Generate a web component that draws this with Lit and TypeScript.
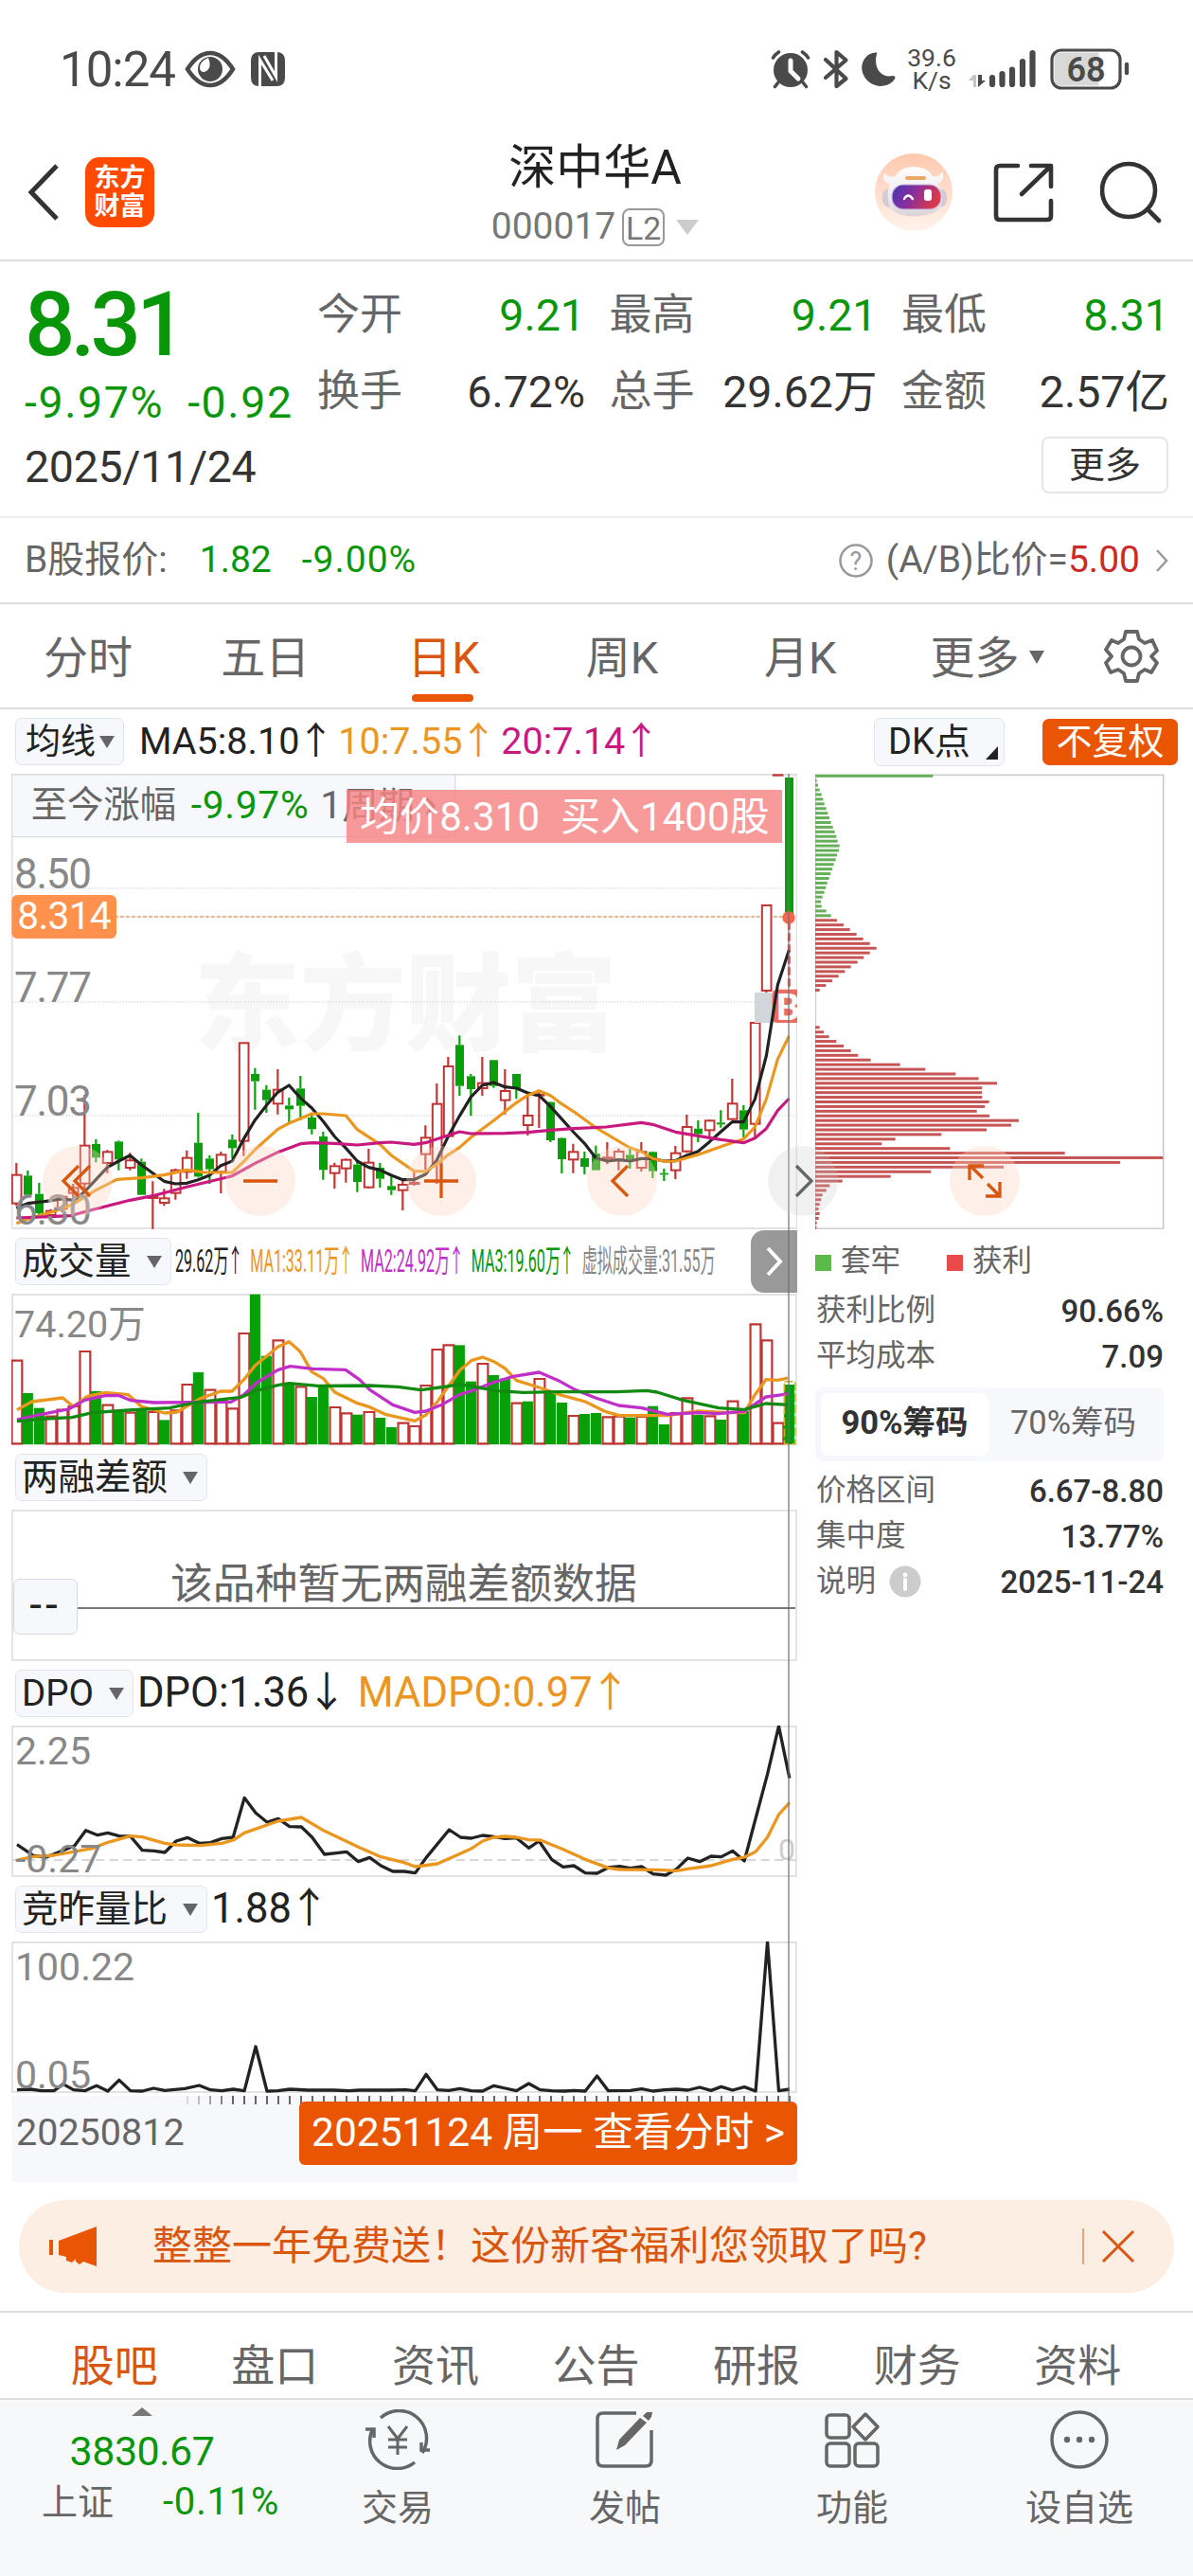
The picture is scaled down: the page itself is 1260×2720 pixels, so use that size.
import { html, svg, css, LitElement } from 'lit';
import { customElement, property } from 'lit/decorators.js';
import { classMap } from 'lit/directives/class-map.js';

type Candle = [dir: 'u' | 'd', high: number, top: number, bottom: number, low: number];

// Vertical positions in thirds of a pixel, one entry per trading day
const CANDLES: Candle[] = [
    ['u', 1254, 1291, 1383, 1390], ['d', 1278, 1294, 1355, 1362], ['d', 1317, 1352, 1413, 1420],
    ['u', 1400, 1405, 1420, 1424], ['u', 1355, 1360, 1400, 1410], ['u', 1320, 1332, 1350, 1365],
    ['u', 1038, 1198, 1320, 1350], ['d', 1179, 1194, 1237, 1252], ['u', 1213, 1218, 1255, 1286],
    ['d', 1183, 1186, 1243, 1277], ['u', 1222, 1245, 1270, 1277], ['d', 1240, 1250, 1355, 1355],
    ['u', 1312, 1360, 1366, 1463], ['u', 1336, 1365, 1381, 1390], ['u', 1272, 1276, 1350, 1370],
    ['u', 1214, 1237, 1283, 1304], ['d', 1095, 1190, 1297, 1300], ['d', 1230, 1240, 1274, 1320],
    ['u', 1218, 1227, 1283, 1350], ['d', 1164, 1180, 1207, 1240], ['u', 873, 873, 1185, 1232],
    ['d', 953, 972, 995, 1085], ['d', 1007, 1022, 1055, 1095], ['u', 957, 1021, 1067, 1100],
    ['d', 1047, 1072, 1084, 1127], ['d', 978, 1018, 1073, 1118], ['d', 1100, 1110, 1147, 1163],
    ['d', 1155, 1170, 1276, 1307], ['u', 1253, 1263, 1287, 1335], ['u', 1240, 1243, 1272, 1316],
    ['d', 1250, 1259, 1314, 1346], ['u', 1209, 1252, 1332, 1335], ['d', 1254, 1269, 1304, 1332],
    ['d', 1297, 1327, 1340, 1355], ['u', 1305, 1322, 1341, 1404], ['u', 1277, 1316, 1321, 1326],
    ['u', 1135, 1173, 1227, 1275], ['u', 1002, 1066, 1255, 1320], ['u', 918, 947, 1170, 1170],
    ['d', 850, 880, 1010, 1041], ['d', 972, 979, 1020, 1105], ['u', 918, 1000, 1018, 1041],
    ['d', 928, 928, 1010, 1016], ['u', 957, 1025, 1056, 1100], ['d', 972, 972, 1017, 1051],
    ['u', 1030, 1103, 1135, 1167], ['u', 1030, 1037, 1041, 1143], ['d', 1060, 1061, 1182, 1188],
    ['d', 1174, 1175, 1242, 1287], ['u', 1193, 1218, 1244, 1286], ['d', 1218, 1239, 1266, 1290],
    ['d', 1199, 1225, 1277, 1277], ['u', 1188, 1236, 1240, 1258], ['u', 1208, 1217, 1245, 1277],
    ['d', 1209, 1228, 1244, 1272], ['u', 1188, 1218, 1270, 1281], ['d', 1217, 1219, 1280, 1302],
    ['d', 1272, 1286, 1291, 1311], ['u', 1200, 1222, 1278, 1305], ['u', 1101, 1139, 1218, 1222],
    ['d', 1119, 1145, 1162, 1188], ['u', 1117, 1119, 1151, 1178], ['d', 1087, 1126, 1132, 1142],
    ['u', 987, 1065, 1116, 1118], ['d', 1071, 1087, 1148, 1180], ['u', 809, 809, 1131, 1178],
    ['u', 435, 437, 709, 716], ['u', 24, 24, 27, 27], ['d', 33, 33, 465, 465],
];

const MA5 = '52,1397 88,1382 140,1376 196,1368 236,1372 268,1345 340,1268 376,1248 412,1230 448,1260 484,1286 520,1312 556,1320 592,1318 628,1307 664,1293 700,1262 736,1248 772,1178 808,1118 844,1072 880,1030 916,1008 952,1048 988,1080 1024,1122 1060,1170 1096,1207 1132,1248 1168,1268 1204,1276 1240,1293 1276,1307 1312,1307 1348,1290 1384,1245 1420,1170 1456,1105 1492,1045 1528,1008 1564,999 1600,1013 1636,1017 1672,1032 1708,1040 1744,1075 1780,1115 1816,1155 1852,1192 1888,1238 1924,1248 1960,1244 1996,1248 2032,1240 2068,1240 2104,1248 2140,1247 2176,1230 2212,1217 2248,1187 2284,1155 2320,1124 2356,1124 2392,1052 2428,915 2464,690 2500,580';
const MA10 = '52,1445 100,1427 170,1408 230,1385 300,1342 370,1306 450,1301 520,1292 592,1276 650,1284 736,1284 772,1250 808,1212 880,1147 916,1128 988,1098 1024,1098 1096,1104 1132,1148 1204,1195 1240,1230 1312,1280 1348,1281 1384,1258 1420,1228 1456,1205 1492,1173 1564,1120 1636,1063 1672,1040 1708,1025 1744,1040 1780,1067 1816,1090 1888,1142 1960,1185 1996,1206 2032,1218 2068,1240 2104,1249 2140,1248 2212,1228 2284,1202 2356,1178 2392,1140 2428,1052 2464,925 2500,852';
const MA20 = '52,1428 160,1424 222,1421 300,1400 412,1372 484,1358 592,1330 736,1295 808,1255 880,1220 952,1193 990,1190 1060,1192 1132,1197 1204,1190 1240,1188 1312,1195 1348,1190 1384,1178 1456,1155 1492,1161 1600,1160 1672,1157 1744,1150 1816,1145 1920,1140 2032,1126 2068,1132 2140,1156 2212,1168 2284,1180 2356,1190 2392,1175 2428,1145 2464,1088 2500,1050';

const VOLUME_TOPS = [
    440, 543, 590, 617, 596, 585, 411, 537, 581, 598, 605, 597, 603, 628, 598, 516, 477, 533, 568, 592,
    354, 230, 425, 376, 510, 523, 555, 518, 588, 607, 611, 603, 621, 651, 638, 648, 519, 405, 391, 391,
    506, 450, 486, 497, 575, 569, 498, 540, 573, 615, 609, 606, 619, 617, 620, 618, 584, 642, 606, 559,
    612, 616, 627, 569, 600, 325, 376, 638, 516,
];
const VOLUME_DOWN = new Set([
    1, 2, 7, 9, 11, 13, 16, 21, 22, 24, 26, 27, 30, 32, 33, 39, 40, 42, 43, 45, 47, 48, 50, 51, 54, 56, 57, 60, 62, 64, 68,
]);
const VOL_MA1 = '33,596 62,570 122,558 143,586 170,553 205,541 250,548 275,585 320,606 345,603 390,560 430,537 452,537 475,500 497,455 520,425 541,397 563,380 585,412 607,475 630,497 652,540 696,575 720,587 750,610 808,631 830,612 852,570 874,520 896,470 918,440 940,429 962,443 984,465 1006,503 1050,525 1095,550 1140,570 1180,602 1205,613 1250,614 1300,614 1360,600 1410,604 1450,605 1470,550 1492,500 1515,502 1535,495';
const VOL_MA2 = '33,627 80,610 133,594 165,565 205,551 230,550 255,566 300,573 450,571 475,548 500,510 541,470 565,458 610,466 673,469 700,500 720,532 765,580 808,604 830,600 860,580 895,548 920,535 960,510 1000,490 1050,477 1090,505 1120,532 1160,558 1205,582 1250,590 1300,610 1360,605 1400,608 1450,600 1492,555 1515,550 1536,545';
const VOL_MA3 = '33,632 90,624 140,620 180,605 250,597 330,590 380,573 420,565 470,556 500,535 541,518 563,512 620,520 720,519 775,523 820,533 870,522 895,515 930,525 970,536 1020,541 1080,539 1200,539 1260,535 1280,540 1330,565 1400,590 1450,595 1492,576 1536,580';

const DPO = '33,1103 65,1138 90,1143 145,1107 167,1058 190,1073 210,1066 232,1076 254,1077 277,1121 300,1123 321,1128 343,1092 365,1081 388,1099 410,1097 432,1084 454,1080 476,955 498,1003 520,1032 542,1021 564,1046 587,1047 608,1080 632,1134 655,1130 675,1126 698,1157 720,1144 742,1170 765,1188 787,1188 809,1193 830,1145 875,1056 897,1080 918,1083 940,1074 962,1078 984,1084 1006,1082 1030,1114 1050,1092 1075,1151 1097,1174 1118,1170 1140,1193 1163,1194 1185,1176 1207,1172 1228,1178 1250,1173 1272,1196 1297,1200 1318,1180 1340,1146 1363,1157 1385,1140 1405,1142 1427,1123 1450,1155 1472,1020 1495,880 1517,728 1538,893';
const MADPO = '33,1152 65,1141 105,1137 180,1115 210,1096 254,1076 277,1079 321,1099 343,1104 390,1106 432,1099 454,1089 476,1066 541,1029 587,1017 632,1060 700,1112 742,1142 787,1160 809,1173 852,1164 918,1116 940,1092 962,1080 984,1077 1006,1080 1030,1088 1053,1089 1097,1118 1140,1150 1185,1177 1207,1182 1280,1183 1318,1186 1340,1180 1385,1170 1427,1150 1450,1143 1472,1126 1495,1080 1517,1008 1538,970';
const AUCTION = '33,650 60,648 80,653 105,653 123,632 143,650 165,653 188,637 210,654 232,619 254,653 277,654 299,645 321,652 360,646 388,636 410,650 432,653 454,648 476,653 498,513 520,654 541,653 565,648 600,651 650,651 680,653 700,651 760,651 790,650 809,653 830,601 852,650 874,652 896,646 918,653 940,654 962,637 984,645 1006,653 1030,630 1052,650 1075,653 1100,654 1118,652 1140,654 1163,606 1185,653 1228,652 1250,647 1272,654 1295,650 1318,648 1340,651 1363,642 1385,652 1405,640 1427,651 1450,641 1472,654 1495,181 1517,653 1538,648';

// Chip distribution, top to bottom
const CHIPS = [
    437, 69, 73, 78, 84, 89, 93, 99, 104, 109, 114, 120, 126, 131, 135, 141, 139, 133, 129, 123, 118, 113, 108, 102, 98,
    93, 87, 82, 84, 99, 114, 133, 154, 174, 195, 216, 237, 258, 237, 218, 198, 177, 158, 138, 118, 98, 78,
    0, 0, 0, 0, 0, 0, 0, 78, 91, 108, 131, 154, 177, 200, 240, 333, 413, 509, 582, 640, 593, 592, 593, 615, 602, 576,
    616, 709, 685, 607, 464, 318, 275, 491, 855, 1166, 1030, 661, 431, 303, 150, 110, 99, 87, 83, 78, 75, 78, 75, 69, 68,
];
const LOSING_CHIPS = 31;

const QUOTES = [
    ['今开', '9.21', true], ['最高', '9.21', true], ['最低', '8.31', true],
    ['换手', '6.72%', false], ['总手', '29.62万', false], ['金额', '2.57亿', false],
] as const;

const text = css`
    :host {
        font-family: Roboto, "Noto Sans CJK SC", sans-serif;
        line-height: 1;
        white-space: nowrap;
    }

    svg {
        display: block;
        flex: none;
    }
`;

@customElement('indicator-pill')
export class IndicatorPill extends LitElement {
    static styles = [text, css`
        :host {
            box-sizing: border-box;
            flex: none;
            display: inline-flex;
            align-items: center;
            gap: var(--pill-gap, 16px);
            height: 50px;
            padding: 0 9px 0 var(--pill-start, 6px);
            border: 1.5px solid #dfe3ea;
            border-radius: 7px;
            background: #f7f8fb;
            color: #222;
            font-size: var(--pill-size, 38.5px);
        }

        i {
            border: 8px solid transparent;
            border-top: 13px solid #666;
            border-bottom: 0;
        }
    `];

    @property()
    label = '';

    render() {
        return html`<span>${this.label}</span><i></i>`;
    }
}

@customElement('candle-chart')
export class CandleChart extends LitElement {
    static styles = [text, css`
        :host {
            display: block;
        }

        .axis {
            font-size: 132px;
            fill: #888;
        }

        .line {
            fill: none;
            stroke-width: 9.5;
            stroke-linejoin: round;
        }

        .info {
            font-size: 115px;
            fill: #666;
        }

        .info_value {
            font-size: 122px;
            fill: #0a960a;
        }

        .mark {
            font-size: 336px;
            font-weight: 900;
            fill: #f7f7f7;
        }

        .banner {
            font-size: 126px;
            fill: #fff;
        }
    `];

    candle([dir, high, top, bottom, low]: Candle, i: number) {
        const x = 52 + i * 36;
        const color = dir === 'u' ? '#bf3434' : '#08a008';
        return svg`
            <path d="M${x} ${high}V${top}M${x} ${bottom}V${low}" stroke=${color} stroke-width="6.5" />
            ${dir === 'u'
                ? svg`<rect x=${x - 13.5} y=${top + 1} width="29" height=${Math.max(bottom - top - 2, 1)} fill="#fff" stroke=${color} stroke-width="6" />`
                : svg`<rect x=${x - 13} y=${top} width="27" height=${bottom - top} fill=${color} />`}
        `;
    }

    render() {
        return html`
            <svg width="830" height="481" viewBox="36 21 2490 1443">
                <text class="mark" x="615" y="872" textLength="1340">东方财富</text>
                <rect x="38" y="24" width="2487" height="1437" fill="none" stroke="#e2e2e2" stroke-width="6" />
                <path d="M38 384H2524M38 744H2524M38 1104H2524" stroke="#ddd" stroke-width="4" stroke-dasharray="4 5" />
                <rect x="38" y="24" width="1404" height="197" fill="#f7f8fb" stroke="#dcdde3" stroke-width="4" />
                <text class="info" x="98" y="159">至今涨幅</text>
                <text class="info info_value" x="605" y="161" textLength="372">-9.97%</text>
                <text class="info" x="1015" y="161"><tspan font-size="122">1</tspan>周期</text>
                <path d="M1352 98L1374 124L1352 150" fill="none" stroke="#666" stroke-width="9" />
                <path d="M38 474H2524" stroke="#dda57c" stroke-width="5" stroke-dasharray="13 5" />
                ${CANDLES.map((c, i) => this.candle(c, i))}
                <path d="M2500 490V700" stroke="#cf6052" stroke-width="9" stroke-dasharray="25 11" />
                <rect x="2391" y="714" width="54" height="96" fill="#d2d6db" />
                <path d="M2526 704H2464Q2446 704 2446 722V792Q2446 810 2464 810H2526Z" fill="#ee6d5e" />
                <text x="2460" y="800" font-size="116" font-weight="700" fill="#fff">B</text>
                <polyline class="line" stroke="#222" points=${MA5} />
                <polyline class="line" stroke="#eb971f" points=${MA10} />
                <polyline class="line" stroke="#c8197f" points=${MA20} />
                <circle cx="2499" cy="477" r="20" fill="#f5694a" />
                <text class="axis" x="45" y="384" textLength="246">8.50</text>
                <text class="axis" x="45" y="744" textLength="246">7.77</text>
                <text class="axis" x="45" y="1104" textLength="246">7.03</text>
                <text class="axis" x="45" y="1450" textLength="246">6.30</text>
                <rect x="37" y="405" width="332" height="138" rx="18" fill="#ff914d" />
                <text x="55" y="513" font-size="122" textLength="298" fill="#fff">8.314</text>
                <rect x="1098" y="72" width="1380" height="168" fill="#f68484" fill-opacity="0.82" />
                <text class="banner" x="1140" y="201" textLength="570">均价8.310</text>
                <text class="banner" x="1776" y="201" textLength="662">买入1400股</text>
            </svg>
        `;
    }
}

@customElement('app-root')
export class AppRoot extends LitElement {
    static styles = [text, css`
        :host {
            display: flex;
            flex-direction: column;
            width: 1260px;
            height: 2720px;
            overflow: hidden;
            background: #fff;
            color: #333;
        }

        .row {
            display: flex;
            align-items: center;
        }

        .green {
            color: #0a960a;
        }

        .status {
            box-sizing: border-box;
            height: 146px;
            padding: 0 67px 0 63px;
            color: #4a4a4a;
        }

        .status__time {
            width: 132px;
            font-size: 51px;
            letter-spacing: -1px;
        }

        .status__nfc {
            margin-left: 16px;
        }

        .status__right {
            margin-left: auto;
        }

        .status__speed {
            width: 54px;
            margin: 0 12px 0 10px;
            text-align: center;
            font-size: 26.5px;
            line-height: 24px;
        }

        .header {
            box-sizing: border-box;
            height: 130px;
            padding: 0 32px 15px 29px;
            border-bottom: 2px solid #ddd;
        }

        .header__side {
            width: 400px;
        }

        .header__side_right {
            justify-content: flex-end;
        }

        .header__logo {
            display: grid;
            place-content: center;
            width: 73px;
            height: 74px;
            margin-left: 27px;
            border-radius: 15px;
            background: #ff4a00;
            color: #fff;
            font-size: 27px;
            font-weight: 700;
            line-height: 30px;
        }

        .header__title {
            flex: 1;
            display: flex;
            flex-direction: column;
            align-items: center;
            gap: 18px;
            padding: 6px 0 0 0;
            font-size: 50px;
            color: #222;
        }

        .header__code {
            font-size: 39px;
            color: #777;
        }

        .header__level {
            box-sizing: border-box;
            width: 45px;
            height: 40px;
            margin: 0 12px 0 7px;
            border: 2px solid #999;
            border-radius: 8px;
            font-size: 34px;
            line-height: 38px;
            text-align: center;
        }

        .down {
            display: inline-block;
            border: 12px solid transparent;
            border-top: 16px solid #ccc;
            border-bottom: 0;
        }

        .quote {
            box-sizing: border-box;
            display: flex;
            height: 271px;
            padding: 22px 25px 0 26px;
            border-bottom: 2px solid #eee;
            font-size: 46.5px;
        }

        .quote__left {
            width: 309px;
        }

        .quote__price {
            margin: -2px 0 12px;
            font-size: 94px;
            font-weight: 500;
            letter-spacing: -5px;
        }

        .quote__change {
            display: flex;
            gap: 25px;
            margin-bottom: 21px;
            letter-spacing: 1.6px;
        }

        .quote__date {
            letter-spacing: -0.3px;
        }

        .quote__right {
            flex: 1;
        }

        .quote__grid {
            display: grid;
            grid-template-columns: repeat(3, 283px);
            gap: 34px 25.5px;
            padding-top: 12px;
        }

        .quote__cell {
            display: flex;
            justify-content: space-between;
        }

        .quote__label {
            font-size: 45px;
            color: #666;
        }

        .quote__more {
            box-sizing: border-box;
            width: 134px;
            height: 60px;
            margin: 24px 1px 0 auto;
            border: 2px solid #e6e6e6;
            border-radius: 8px;
            text-align: center;
            font-size: 38px;
            line-height: 56px;
        }

        .bshare {
            box-sizing: border-box;
            height: 91px;
            padding: 0 23px 0 26px;
            border-bottom: 2px solid #ddd;
            color: #666;
            font-size: 39px;
        }

        .bshare__price {
            margin: 0 32px 0 34px;
        }

        .bshare__change {
            letter-spacing: 1px;
        }

        .bshare__ratio {
            margin-left: auto;
            gap: 13px;
        }

        .bshare__ratio b {
            font-weight: 400;
            color: #cc2a2a;
        }

        .tabs {
            box-sizing: border-box;
            height: 111px;
            padding-top: 3px;
            border-bottom: 2px solid #ddd;
            font-size: 47px;
            color: #666;
        }

        .tabs__item {
            position: relative;
            width: 188.4px;
            display: flex;
            align-items: center;
            justify-content: center;
        }

        .tabs__item:first-child {
            width: 186px;
        }

        .tabs__item_active {
            color: #d9560f;
        }

        .tabs__item_active::after {
            content: "";
            position: absolute;
            left: 61px;
            bottom: -23px;
            width: 65px;
            height: 8px;
            border-radius: 4px;
            background: #ea5504;
        }

        .tabs__item_more {
            gap: 10px;
            padding-left: 14px;
            width: 178px;
        }

        .tabs__item_more i {
            border: 8px solid transparent;
            border-top: 14px solid #666;
            border-bottom: 0;
        }

        .tabs__gear {
            margin: -3px 0 0 34px;
        }

        .ma {
            box-sizing: border-box;
            height: 68px;
            padding: 0 16px 0 16px;
            font-size: 39.5px;
        }

        .ma indicator-pill {
            --pill-gap: 4px;
            --pill-start: 10px;
            --pill-size: 37px;
            margin-right: 16px;
        }

        .arrow {
            display: inline-block;
            width: 0.86em;
            text-indent: -0.07em;
        }

        .black {
            color: #222;
        }

        .orange {
            color: #eb971f;
        }

        .magenta {
            color: #c8197f;
        }

        .violet {
            color: #c030c8;
        }

        .ma span + span {
            margin-left: 7px;
        }

        .ma__dk {
            position: relative;
            box-sizing: border-box;
            width: 138px;
            height: 51px;
            margin-left: auto;
            padding-left: 14px;
            border: 1.5px solid #dfe3ea;
            border-radius: 7px;
            background: #f7f8fb;
            color: #222;
            font-size: 38px;
            line-height: 48px;
        }

        .ma__dk::after {
            content: "";
            position: absolute;
            right: 6px;
            bottom: 6px;
            border-left: 13px solid transparent;
            border-bottom: 14px solid #222;
        }

        .ma__fq {
            width: 143px;
            height: 49px;
            margin-left: 40px;
            border-radius: 7px;
            background: #ea5504;
            color: #fff;
            font-size: 38px;
            line-height: 48px;
            text-align: center;
        }

        .body {
            position: relative;
            display: flex;
            height: 1487px;
            padding: 0 31px 0 12px;
        }

        .charts {
            width: 830px;
            margin-right: 19px;
        }

        .crosshair {
            position: absolute;
            left: 832px;
            top: 0;
            width: 2px;
            height: 1404px;
            background: rgba(110, 110, 110, 0.6);
        }

        .panel {
            position: relative;
            height: 160px;
        }

        .panel polyline {
            fill: none;
            stroke-width: 3.3;
            stroke-linejoin: round;
            vector-effect: non-scaling-stroke;
        }

        .panel rect {
            vector-effect: non-scaling-stroke;
        }

        .panel__top,
        .panel__bottom {
            position: absolute;
            left: 4px;
            font-size: 41px;
            color: #888;
        }

        .panel__top {
            top: 7px;
        }

        .panel__top_volume {
            top: 13px;
            left: 3px;
            font-size: 39.5px;
        }

        .panel__bottom {
            bottom: -2px;
        }

        .panel__zero {
            position: absolute;
            right: 2px;
            bottom: 13px;
            font-size: 32px;
            color: #ccc;
        }

        .sub {
            height: 68px;
            padding-left: 4px;
            font-size: 43.5px;
            position: relative;
        }

        .sub indicator-pill {
            margin-right: 4px;
        }

        .sub__narrow {
            display: flex;
            gap: 15px;
            width: 0;
            font-size: 32.5px;
            transform: scaleX(0.495);
            transform-origin: left;
        }

        .sub__narrow .arrow {
            width: 0.95em;
        }

        .gray {
            color: #888;
        }

        .collapse {
            position: absolute;
            right: 0;
            top: 1px;
            display: grid;
            place-content: center;
            width: 49px;
            height: 66px;
            border-radius: 14px 0 0 14px;
            background: #999;
        }

        .empty {
            box-sizing: border-box;
            border: 2px solid #e4e4e4;
            padding: 55px 0 0 166px;
            font-size: 44.8px;
            color: #666;
        }

        .empty__axis {
            position: absolute;
            left: 68px;
            right: 0;
            top: 101px;
            height: 1.5px;
            background: #777;
        }

        .empty__value {
            position: absolute;
            left: 0;
            top: 71px;
            box-sizing: border-box;
            width: 68px;
            height: 59px;
            border: 1.5px solid #d5dae2;
            border-radius: 7px;
            background: #f7f8fb;
            color: #222;
            font-size: 46px;
            line-height: 52px;
            letter-spacing: 4px;
            text-align: center;
        }

        .sub__second {
            margin-left: 14px;
        }

        .timeline {
            position: relative;
            height: 91px;
            margin-top: 3px;
            background: #f7f8fb;
        }

        .timeline__date {
            padding: 10px 0 0 5px;
            font-size: 39.5px;
            color: #666;
        }

        .timeline__link {
            position: absolute;
            right: 0;
            top: 6px;
            box-sizing: border-box;
            width: 526px;
            height: 67px;
            padding-left: 13px;
            border-radius: 6px;
            background: #ea5504;
            color: #fff;
            font-size: 42.5px;
            line-height: 65px;
        }

        .nav {
            position: absolute;
            top: 393px;
            display: grid;
            place-content: center;
            width: 74px;
            height: 74px;
            border-radius: 50%;
            background: rgba(251, 214, 192, 0.36);
        }

        .nav_gray {
            background: rgba(200, 200, 200, 0.25);
        }

        .chips {
            width: 368px;
            font-size: 31.5px;
            color: #666;
        }

        .chips__legend {
            height: 68px;
            margin-bottom: -6px;
        }

        .chips__legend i {
            width: 17px;
            height: 17px;
            margin: 2px 10px 0 0;
            background: #5ab947;
        }

        .chips__legend span + i {
            margin-left: 49px;
            background: #ea4a4a;
        }

        .chips__row {
            display: flex;
            align-items: center;
            justify-content: space-between;
            height: 48px;
            padding-left: 1px;
        }

        .chips__row b {
            font-size: 33px;
            font-weight: 500;
            color: #333;
        }

        .chips__note {
            gap: 14px;
        }

        .chips__tabs {
            box-sizing: border-box;
            display: grid;
            grid-template-columns: 177px 1fr;
            height: 78px;
            margin: 9px 0 7px;
            padding: 6px;
            border-radius: 8px;
            background: #f7f8fb;
            font-size: 34.5px;
            line-height: 62px;
            text-align: center;
        }

        .chips__tabs b {
            border-radius: 8px;
            background: #fff;
            color: #333;
            font-weight: 700;
        }

        .promo {
            box-sizing: border-box;
            height: 98px;
            margin: 19px 20px;
            padding: 0 41px 0 32px;
            border-radius: 49px;
            background: #fdeee4;
            color: #d9560f;
            font-size: 42px;
        }

        .promo__text {
            margin-left: 57px;
            padding-bottom: 1px;
        }

        .promo__close {
            margin-left: auto;
            padding-left: 18px;
            border-left: 2px solid #e9a47c;
            height: 38px;
        }

        .sections {
            box-sizing: border-box;
            height: 94px;
            padding: 21px 37px 0 36px;
            border-top: 2px solid #ddd;
            border-bottom: 2px solid #ddd;
            color: #666;
            font-size: 46px;
        }

        .sections span {
            flex: 1;
            text-align: center;
        }

        .sections .sections__active {
            color: #d9560f;
        }

        .footer {
            flex: 1;
            display: flex;
            padding-top: 10px;
            background: #f7f8fa;
            color: #666;
            font-size: 38px;
        }

        .footer__index {
            width: 300px;
            display: flex;
            flex-direction: column;
            align-items: center;
            font-size: 43px;
        }

        .footer__index i {
            margin: -2px 0 16px;
            border: 11px solid transparent;
            border-bottom: 9px solid #777;
            border-top: 0;
        }

        .footer__index > span {
            letter-spacing: -0.5px;
        }

        .footer__row {
            display: flex;
            align-items: center;
            gap: 52px;
            width: 100%;
            margin-top: 12px;
            padding-left: 88px;
            font-size: 40px;
            letter-spacing: 0.8px;
        }

        .footer__row span:first-child {
            color: #666;
            font-size: 38px;
            letter-spacing: 0;
        }

        .footer__item {
            width: 240px;
            display: flex;
            flex-direction: column;
            align-items: center;
            gap: 21px;
        }
    `];

    // Sub-charts share one horizontal scale; `top` is the first row of the viewBox
    plot(top: number, content: unknown) {
        return html`
            <svg width="830" height="160" viewBox="22 ${top} 1531 480" preserveAspectRatio="none">
                <rect x="24" y=${top + 3} width="1527" height="474" fill="none" stroke="#e2e2e2" stroke-width="2" />
                ${content}
            </svg>
        `;
    }

    volume() {
        return VOLUME_TOPS.map((y, i) => {
            const x = (17.3 + i * 12) * 1.8447;
            return VOLUME_DOWN.has(i)
                ? svg`<rect x=${x - 10.2} y=${y} width="20.4" height=${705 - y} fill="#08a008" />`
                : svg`<rect x=${x - 9} y=${y} width="20" height=${703 - y} fill="#fff" stroke="#bf3434" stroke-width="2.2" />`;
        });
    }

    chips() {
        return CHIPS.map((end, i) => end
            ? svg`<rect x="64" y=${23.5 + i * 14.75} width=${end - 64} height="9" fill=${i < LOSING_CHIPS ? '#67b05a' : '#c85555'} />`
            : '');
    }

    renderStatus() {
        return html`
            <div class="row status">
                <span class="status__time">10:24</span>
                <svg width="54" height="40" viewBox="0 0 54 40">
                    <path d="M3 20C10 9 18 3 27 3S44 9 51 20C44 31 36 37 27 37S10 31 3 20Z" fill="none" stroke="#4a4a4a" stroke-width="4.5" />
                    <circle cx="27" cy="20" r="13" fill="#4a4a4a" />
                    <path d="M25 8Q15 12 16 20Q18 25 23 22Q29 18 25 8Z" fill="#fff" />
                </svg>
                <svg class="status__nfc" width="36" height="38" viewBox="0 0 36 38">
                    <path d="M9 1H27Q36 1 36 10V28Q36 37 27 37H9Q0 37 0 28V10Q0 1 9 1Z" fill="#4a4a4a" />
                    <path d="M9.500 37V9L23 31" fill="none" stroke="#fff" stroke-width="3" />
                    <path d="M14 5L26.500 27V1" fill="none" stroke="#fff" stroke-width="3" />
                </svg>
                <div class="row status__right">
                    <svg width="44" height="42" viewBox="0 0 44 42">
                        <circle cx="22" cy="22" r="18" fill="#4a4a4a" />
                        <path d="M3.500 9Q5 6 9.500 3M40.500 9Q39 6 34.500 3M9 35L5.500 39.500M35 35L38.500 39.500" stroke="#4a4a4a" stroke-width="3.600" stroke-linecap="round" fill="none" />
                        <path d="M22 12V23L30 31" stroke="#fff" stroke-width="5" fill="none" stroke-linejoin="round" stroke-linecap="round" />
                    </svg>
                    <svg width="52" height="42" viewBox="0 0 52 42">
                        <path d="M15 11L36.500 31L26.500 39V3L36.500 11.500L15 30" stroke="#4a4a4a" stroke-width="4.200" fill="none" stroke-linejoin="round" stroke-linecap="round" />
                    </svg>
                    <svg width="38" height="40" viewBox="0 0 38 40">
                        <path d="M16 2.500C4 3-2 16 3 26C8 38 24 42 34 33Q39 27 34 27C22 30 13 19 17 4Q18 2 16 2.500Z" fill="#4a4a4a" />
                    </svg>
                    <div class="status__speed">39.6<br>K/s</div>
                    <svg width="72" height="42" viewBox="0 0 72 42">
                        <path d="M0 33L5 27H8V40H5V33" fill="#c4c4c4" />
                        <path d="M10 27V40L18 33H14V27" fill="#4a4a4a" />
                        <path d="M25 30V37M35.500 26V37M46 21.500V37M57 13V37M67.500 4V37" stroke="#4a4a4a" stroke-width="6.200" stroke-linecap="round" />
                    </svg>
                    <svg width="98" height="44" viewBox="-14 0 98 44">
                        <rect x="2" y="2" width="72" height="40" rx="10" fill="#fff" stroke="#4a4a4a" stroke-width="3.200" />
                        <path d="M11 4.500H51.500V39.500H11Q4.500 39.500 4.500 33V11Q4.500 4.500 11 4.500Z" fill="#d8d8d8" />
                        <path d="M81 17V26" stroke="#4a4a4a" stroke-width="4.400" stroke-linecap="round" />
                        <text x="38" y="34.500" text-anchor="middle" font-size="36" font-weight="600" fill="#4a4a4a">68</text>
                    </svg>
                </div>
            </div>
        `;
    }

    renderHeader() {
        return html`
            <div class="row header">
                <div class="row header__side">
                    <svg width="34" height="62" viewBox="0 0 34 62">
                        <path d="M31 3L4 31L31 59" fill="none" stroke="#333" stroke-width="5" />
                    </svg>
                    <div class="header__logo"><span>东方</span><span>财富</span></div>
                </div>
                <div class="header__title">
                    <span>深中华A</span>
                    <div class="row header__code">
                        <span>000017</span><span class="header__level">L2</span><i class="down"></i>
                    </div>
                </div>
                <div class="row header__side header__side_right">
                    <svg width="82" height="82" viewBox="0 0 82 82">
                        <defs>
                            <linearGradient id="halo" x1="0" y1="0" x2="0" y2="1">
                                <stop offset="0" stop-color="#fdc9ad" />
                                <stop offset="1" stop-color="#fff3ec" />
                            </linearGradient>
                            <linearGradient id="fur" x1="0" y1="0" x2="0" y2="1">
                                <stop offset="0" stop-color="#fffdfd" />
                                <stop offset="0.700" stop-color="#ece6ec" />
                                <stop offset="1" stop-color="#d9d3d8" />
                            </linearGradient>
                            <linearGradient id="visor" x1="0" y1="0" x2="1" y2="0.300">
                                <stop offset="0" stop-color="#4038b4" />
                                <stop offset="0.500" stop-color="#8a2f9c" />
                                <stop offset="1" stop-color="#d83a4c" />
                            </linearGradient>
                        </defs>
                        <circle cx="41" cy="41" r="41" fill="url(#halo)" />
                        <rect x="8" y="37" width="16" height="20" rx="8" fill="#d3ccd2" />
                        <rect x="60" y="37" width="16" height="20" rx="8" fill="#d3ccd2" />
                        <path d="M16 32Q6 30 10 20Q13 26 22 24Q27 14 41 14T61 24Q68 26 71 19Q75 29 66 32Q71 38 71 48Q70 62 58 64Q41 69 26 64Q14 61 14 47Q13 38 16 32Z" fill="url(#fur)" />
                        <rect x="18" y="33" width="52" height="26" rx="12" fill="url(#visor)" stroke="#c9bfe0" stroke-width="1.200" />
                        <path d="M31 48Q35 41 40 48" fill="none" stroke="#fff" stroke-width="2.400" stroke-linecap="round" />
                        <rect x="52" y="38" width="8" height="12" rx="3" fill="#fff" />
                        <rect x="32" y="24" width="22" height="4" rx="2" fill="#eba766" />
                    </svg>
                    <svg width="156" height="66" viewBox="-42 0 156 66">
                        <path d="M27 5H8Q4 5 4 9V58Q4 62 8 62H58Q62 62 62 58V42M41 5H62V27M61 6L31 35" fill="none" stroke="#333" stroke-width="4.600" stroke-linejoin="round" stroke-linecap="round" />
                    </svg>
                    <svg width="66" height="66" viewBox="0 0 66 66">
                        <circle cx="30" cy="31" r="28" fill="none" stroke="#333" stroke-width="4.600" />
                        <path d="M50 51L62 63" stroke="#333" stroke-width="4.600" stroke-linecap="round" />
                    </svg>
                </div>
            </div>
        `;
    }

    renderQuote() {
        return html`
            <div class="quote">
                <div class="quote__left">
                    <div class="green quote__price">8.31</div>
                    <div class="green quote__change"><span>-9.97%</span><span>-0.92</span></div>
                    <div class="quote__date">2025/11/24</div>
                </div>
                <div class="quote__right">
                    <div class="quote__grid">
                        ${QUOTES.map(([label, value, green]) => html`
                            <div class="quote__cell">
                                <span class="quote__label">${label}</span>
                                <span class="${classMap({ green })}">${value}</span>
                            </div>
                        `)}
                    </div>
                    <div class="quote__more">更多</div>
                </div>
            </div>
            <div class="row bshare">
                <span>B股报价:</span>
                <span class="green bshare__price">1.82</span>
                <span class="green bshare__change">-9.00%</span>
                <div class="row bshare__ratio">
                    <svg width="38" height="38" viewBox="0 0 38 38">
                        <circle cx="19" cy="19" r="16.500" fill="none" stroke="#999" stroke-width="2.500" />
                        <text x="19" y="28.500" text-anchor="middle" font-size="27" fill="#999">?</text>
                    </svg>
                    <span>(A/B)比价=<b>5.00</b></span>
                    <svg width="20" height="26" viewBox="0 0 20 26">
                        <path d="M5 2L15 13L5 24" fill="none" stroke="#999" stroke-width="2.500" />
                    </svg>
                </div>
            </div>
        `;
    }

    renderTabs() {
        return html`
            <div class="row tabs">
                ${['分时', '五日', '日K', '周K', '月K'].map(tab => html`
                    <div class="${classMap({ tabs__item: true, tabs__item_active: tab === '日K' })}">${tab}</div>
                `)}
                <div class="tabs__item tabs__item_more">更多<i></i></div>
                <svg class="tabs__gear" width="58" height="58" viewBox="0 0 58 58">
                    <path d="M23 3H35L37 11L43 15L51 12L56 23L50 29L56 36L50 46L43 43L37 47L35 55H23L21 47L15 43L7 46L2 36L8 29L2 22L8 12L15 15L21 11Z" fill="none" stroke="#666" stroke-width="3.800" stroke-linejoin="round" />
                    <circle cx="29" cy="29" r="9.500" fill="none" stroke="#666" stroke-width="3.800" />
                </svg>
            </div>
            <div class="row ma">
                <indicator-pill label="均线"></indicator-pill>
                <span class="black">MA5:8.10<i class="arrow" style="font-style:normal">↑</i></span>
                <span class="orange">10:7.55<i class="arrow" style="font-style:normal">↑</i></span>
                <span class="magenta">20:7.14<i class="arrow" style="font-style:normal">↑</i></span>
                <div class="ma__dk">DK点</div>
                <div class="ma__fq">不复权</div>
            </div>
        `;
    }

    renderCharts() {
        return html`
            <div class="charts">
                <candle-chart></candle-chart>
                <div class="row sub">
                    <indicator-pill label="成交量"></indicator-pill>
                    <div class="sub__narrow">
                        <span class="black">29.62万<span class="arrow">↑</span></span>
                        <span class="orange">MA1:33.11万<span class="arrow">↑</span></span>
                        <span class="violet">MA2:24.92万<span class="arrow">↑</span></span>
                        <span class="green">MA3:19.60万<span class="arrow">↑</span></span>
                        <span class="gray">虚拟成交量:31.55万</span>
                    </div>
                    <div class="collapse">
                        <svg width="20" height="32" viewBox="0 0 20 32"><path d="M3 2L16 16L3 30" fill="none" stroke="#fff" stroke-width="4" /></svg>
                    </div>
                </div>
                <div class="panel">
                    ${this.plot(228, svg`
                        ${this.volume()}
                        <polyline stroke="#eb971f" points=${VOL_MA1} />
                        <polyline stroke="#c030c8" points=${VOL_MA2} />
                        <polyline stroke="#128a12" points=${VOL_MA3} />
                        <rect x="1528" y="506" width="21" height="198" fill="none" stroke="#d0b020" stroke-width="1.500" stroke-dasharray="9 3" />
                    `)}
                    <span class="panel__top panel__top_volume">74.20万</span>
                </div>
                <div class="row sub"><indicator-pill label="两融差额"></indicator-pill></div>
                <div class="panel empty">
                    该品种暂无两融差额数据
                    <div class="empty__axis"></div>
                    <div class="empty__value">--</div>
                </div>
                <div class="row sub">
                    <indicator-pill label="DPO"></indicator-pill>
                    <span class="black">DPO:1.36<span class="arrow">↓</span></span>
                    <span class="orange sub__second">MADPO:0.97<span class="arrow">↑</span></span>
                </div>
                <div class="panel">
                    ${this.plot(726, svg`
                        <path d="M24 1152H1551" stroke="#ccc" stroke-width="4" stroke-dasharray="17 10" />
                        <polyline stroke="#222" points=${DPO} />
                        <polyline stroke="#eb971f" points=${MADPO} />
                    `)}
                    <span class="panel__top">2.25</span>
                    <span class="panel__bottom">-0.27</span>
                    <span class="panel__zero">0</span>
                </div>
                <div class="row sub">
                    <indicator-pill label="竞昨量比"></indicator-pill>
                    <span class="black">1.88<span class="arrow">↑</span></span>
                </div>
                <div class="panel">
                    ${this.plot(180, svg`<polyline stroke="#222" points=${AUCTION} />`)}
                    <span class="panel__top">100.22</span>
                    <span class="panel__bottom">0.05</span>
                </div>
                <div class="timeline">
                    <svg width="830" height="9">
                        ${Array.from({ length: 54 }, (_, i) => svg`
                            <path d="M${186 + i * 12} 0V9" stroke="#666" stroke-width="2" stroke-opacity=${Math.min(1, (i + 1) / 5)} />
                        `)}
                    </svg>
                    <div class="timeline__date">20250812</div>
                    <div class="timeline__link">20251124 周一 查看分时 &gt;</div>
                </div>
            </div>
        `;
    }

    renderChips() {
        return html`
            <div class="chips">
                <svg width="370" height="481" viewBox="64 21 1110 1443">
                    <rect x="65" y="25" width="1102" height="1437" fill="none" stroke="#ccc" stroke-width="5" />
                    ${this.chips()}
                </svg>
                <div class="row chips__legend"><i></i><span>套牢</span><i></i><span>获利</span></div>
                <div class="chips__row"><span>获利比例</span><b>90.66%</b></div>
                <div class="chips__row"><span>平均成本</span><b>7.09</b></div>
                <div class="chips__tabs"><b>90%筹码</b><span>70%筹码</span></div>
                <div class="chips__row"><span>价格区间</span><b>6.67-8.80</b></div>
                <div class="chips__row"><span>集中度</span><b>13.77%</b></div>
                <div class="chips__row">
                    <div class="row chips__note">
                        <span>说明</span>
                        <svg width="34" height="34" viewBox="0 0 34 34">
                            <circle cx="17" cy="17" r="16.500" fill="#ccc" />
                            <circle cx="17" cy="10" r="2.400" fill="#fff" />
                            <path d="M17 15V25" stroke="#fff" stroke-width="4" stroke-linecap="round" />
                        </svg>
                    </div>
                    <b>2025-11-24</b>
                </div>
            </div>
        `;
    }

    renderNav() {
        const icons: [number, string, boolean][] = [
            [45, 'M32 3L16 19L32 35M20 3L4 19L20 35', false],
            [238, 'M1 19H37', false],
            [429, 'M1 19H37M19 1V37', false],
            [620, 'M25 3L9 19L25 35', false],
            [811, 'M12 3L28 19L12 35', true],
            [1003, 'M17 16L4 3M3 18V3H18M22 22L35 35M20 35H35V20', false],
        ];
        return icons.map(([left, d, gray]) => html`
            <div class="${classMap({ nav: true, nav_gray: gray })}" style="left:${left}px">
                <svg width="38" height="38" viewBox="0 0 38 38">
                    <path d="${d}" fill="none" stroke="${gray ? '#666' : '#d9560f'}" stroke-width="3.3" />
                </svg>
            </div>
        `);
    }

    renderFooter() {
        return html`
            <div class="row promo">
                <svg width="52" height="46" viewBox="0 0 52 46">
                    <path d="M2 16V32" stroke="#ea5504" stroke-width="4" />
                    <path d="M10 17L50 2V44L36 39L32 42L28 39V36L24 40L18 38V34L10 32Z" fill="#ea5504" />
                </svg>
                <span class="promo__text">整整一年免费送！这份新客福利您领取了吗?</span>
                <div class="row promo__close">
                    <svg width="36" height="36" viewBox="0 0 36 36"><path d="M2 2L34 34M34 2L2 34" stroke="#d9560f" stroke-width="3" /></svg>
                </div>
            </div>
            <div class="row sections">
                ${['股吧', '盘口', '资讯', '公告', '研报', '财务', '资料'].map((name, i) => html`
                    <span class="${classMap({ sections__active: i === 0 })}">${name}</span>
                `)}
            </div>
            <div class="footer">
                <div class="footer__index green">
                    <i></i>
                    <span>3830.67</span>
                    <div class="footer__row"><span>上证</span><span>-0.11%</span></div>
                </div>
                <div class="footer__item">
                    <svg width="76" height="64" viewBox="0 0 76 64" fill="none" stroke="#666" stroke-width="3.500">
                        <path d="M20 9A29 29 0 0 1 64 46M12 20A29 29 0 0 0 56 56" />
                        <path d="M4 21H13V30M72 43H63V35" />
                        <path d="M28 18L38 31L48 18M38 31V48M28 32H48M28 40H48" stroke-width="3" />
                    </svg>
                    <span>交易</span>
                </div>
                <div class="footer__item">
                    <svg width="64" height="64" viewBox="0 0 64 64" fill="none" stroke="#666" stroke-width="3.500">
                        <path d="M44 4H9Q3 4 3 10V54Q3 60 9 60H54Q60 60 60 54V22" />
                        <path d="M23 43L26 32L48 9L55 14L32 38Z" fill="#666" stroke="none" />
                        <path d="M51 7L55 3L61 3L60 8L57 12Z" fill="#666" stroke="none" />
                    </svg>
                    <span>发帖</span>
                </div>
                <div class="footer__item">
                    <svg width="64" height="64" viewBox="0 0 64 64" fill="none" stroke="#666" stroke-width="3.500" stroke-linejoin="round">
                        <rect x="5" y="6" width="24" height="24" rx="4" />
                        <rect x="5" y="36" width="24" height="24" rx="4" />
                        <rect x="35" y="36" width="24" height="24" rx="4" />
                        <path d="M46 5L59 18.500L46 32L33 18.500Z" />
                    </svg>
                    <span>功能</span>
                </div>
                <div class="footer__item">
                    <svg width="64" height="64" viewBox="0 0 64 64">
                        <circle cx="32" cy="32" r="29" fill="none" stroke="#666" stroke-width="3.500" />
                        <g fill="#666"><circle cx="19" cy="32" r="3.200" /><circle cx="32" cy="32" r="3.200" /><circle cx="45" cy="32" r="3.200" /></g>
                    </svg>
                    <span>设自选</span>
                </div>
            </div>
        `;
    }

    render() {
        return html`
            ${this.renderStatus()}
            ${this.renderHeader()}
            ${this.renderQuote()}
            ${this.renderTabs()}
            <div class="body">
                ${this.renderCharts()}
                ${this.renderChips()}
                <div class="crosshair"></div>
                ${this.renderNav()}
            </div>
            ${this.renderFooter()}
        `;
    }
}

declare global {
    interface HTMLElementTagNameMap {
        'indicator-pill': IndicatorPill;
        'candle-chart': CandleChart;
        'app-root': AppRoot;
    }
}
